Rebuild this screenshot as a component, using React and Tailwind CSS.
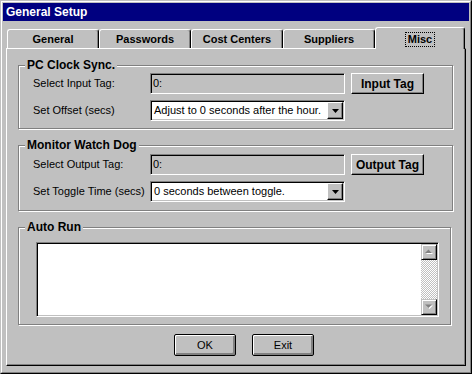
import React from 'react';

const raised =
  'border border-t-white border-l-white border-r-black border-b-black shadow-[inset_-1px_-1px_0_#808080]';
const sunken =
  'border border-t-[#808080] border-l-[#808080] border-r-white border-b-white shadow-[inset_1px_1px_0_#000,inset_-1px_-1px_0_#c0c0c0]';

function Group({ title, className, children }) {
  return (
    <div className={`relative border border-[#808080] shadow-[inset_1px_1px_0_#fff,1px_1px_0_#fff] ${className}`}>
      <span className="absolute -top-[8px] left-[6px] bg-[#c0c0c0] px-[2px] text-[12px] font-bold leading-[14px]">
        {title}
      </span>
      {children}
    </div>
  );
}

function Row({ label, children }) {
  return (
    <div className="flex items-center">
      <span className="w-[117px] text-[11px] leading-[13px]">{label}</span>
      {children}
    </div>
  );
}

function Field({ value }) {
  return (
    <div className={`${sunken} w-[195px] h-[21px] bg-[#c0c0c0] pl-[2px] text-[11px] leading-[19px]`}>{value}</div>
  );
}

function Select({ value }) {
  return (
    <div className={`${sunken} w-[195px] h-[21px] bg-white flex items-center p-[1px]`}>
      <span className="flex-1 pl-[2px] text-[11px] leading-[17px] whitespace-nowrap overflow-hidden">{value}</span>
      <div className={`${raised} w-[16px] h-[17px] bg-[#c0c0c0] flex items-center justify-center`}>
        <svg width="7" height="4" viewBox="0 0 7 4">
          <path d="M0 0h7L3.5 4z" fill="#000" />
        </svg>
      </div>
    </div>
  );
}

function TagButton({ children }) {
  return (
    <button className={`${raised} ml-[6px] w-[73px] h-[21px] bg-[#c0c0c0] text-[12px] font-bold leading-[14px]`}>
      {children}
    </button>
  );
}

function DialogButton({ children, className }) {
  return (
    <button
      className={`w-[62px] h-[22px] rounded-[2px] border border-black bg-[#c0c0c0] shadow-[inset_1px_1px_0_#fff,inset_-2px_-2px_0_#808080] text-[11px] leading-[13px] ${className}`}
    >
      {children}
    </button>
  );
}

function ScrollArrow({ up }) {
  return (
    <div className="w-[16px] h-[16px] bg-[#c0c0c0] border border-t-[#c0c0c0] border-l-[#c0c0c0] border-r-black border-b-black shadow-[inset_1px_1px_0_#fff,inset_-1px_-1px_0_#808080] flex items-center justify-center">
      <svg width="8" height="6" viewBox="0 0 8 6">
        {up ? (
          <>
            <path d="M1 5h7L4.5 1.5z" fill="#fff" />
            <path d="M0 4h7L3.5 0.5z" fill="#808080" />
          </>
        ) : (
          <>
            <path d="M1 1.5h7L4.5 5z" fill="#fff" />
            <path d="M0 0.5h7L3.5 4z" fill="#808080" />
          </>
        )}
      </svg>
    </div>
  );
}

export default function App() {
  const tabs = ['General', 'Passwords', 'Cost Centers', 'Suppliers'];

  return (
    <div className="w-[472px] h-[374px] bg-[#c0c0c0] text-black font-['Liberation_Sans',Arial,sans-serif] border border-t-[#c0c0c0] border-l-[#c0c0c0] border-r-black border-b-black">
      <div className="h-full flex flex-col p-px border border-t-white border-l-white border-r-[#808080] border-b-[#808080]">
        {/* Title bar */}
        <div className="h-[18px] bg-[#000080] pl-[3px] text-white text-[12px] font-bold leading-[18px]">General Setup</div>

        <div className="px-[3px] pt-[6px]">
          {/* Tabs */}
          <div className="flex items-end h-[21px] pl-px">
            {tabs.map((t) => (
              <div
                key={t}
                className="w-[92px] h-[19px] flex items-center justify-center rounded-t-[3px] border-t border-l border-r border-t-white border-l-white border-r-black shadow-[inset_-1px_0_0_#808080] text-[11px] font-bold leading-[13px]"
              >
                {t}
              </div>
            ))}
            <div className="relative z-10 -mb-px w-[90px] h-[22px] flex items-center justify-center pt-px rounded-t-[3px] bg-[#c0c0c0] border-t border-l border-r border-t-white border-l-white border-r-black shadow-[inset_-1px_0_0_#808080]">
              <span className="border border-dotted border-black px-[2px] text-[11px] font-bold leading-[13px]">Misc</span>
            </div>
          </div>

          {/* Tab panel */}
          <div className="h-[318px] flex flex-col pl-[11px] border border-t-white border-l-white border-r-black border-b-black shadow-[inset_-1px_-1px_0_#808080]">
            <Group title="PC Clock Sync." className="mt-[16px] w-[435px] h-[64px] flex flex-col gap-[6px] pt-[7px] pl-[14px]">
              <Row label="Select Input Tag:">
                <Field value="0:" />
                <TagButton>Input Tag</TagButton>
              </Row>
              <Row label="Set Offset (secs)">
                <Select value="Adjust to 0 seconds after the hour." />
              </Row>
            </Group>

            <Group title="Monitor Watch Dog" className="mt-[16px] w-[435px] h-[66px] flex flex-col gap-[6px] pt-[8px] pl-[14px]">
              <Row label="Select Output Tag:">
                <Field value="0:" />
                <TagButton>Output Tag</TagButton>
              </Row>
              <Row label="Set Toggle Time (secs)">
                <Select value="0 seconds between toggle." />
              </Row>
            </Group>

            <Group title="Auto Run" className="mt-[16px] w-[433px] h-[98px] pt-[14px] pl-[17px]">
              <div className={`${sunken} w-[403px] h-[75px] bg-white flex p-px`}>
                <div className="flex-1" />
                <div className="w-[16px] flex flex-col">
                  <ScrollArrow up />
                  <div className="flex-1 bg-[image:repeating-conic-gradient(#fff_0_25%,#c0c0c0_0_50%)] bg-[length:2px_2px]" />
                  <ScrollArrow />
                </div>
              </div>
            </Group>

            <div className="flex mt-[9px] ml-[156px] gap-[16px]">
              <DialogButton>OK</DialogButton>
              <DialogButton>Exit</DialogButton>
            </div>
          </div>
        </div>
      </div>
    </div>
  );
}
